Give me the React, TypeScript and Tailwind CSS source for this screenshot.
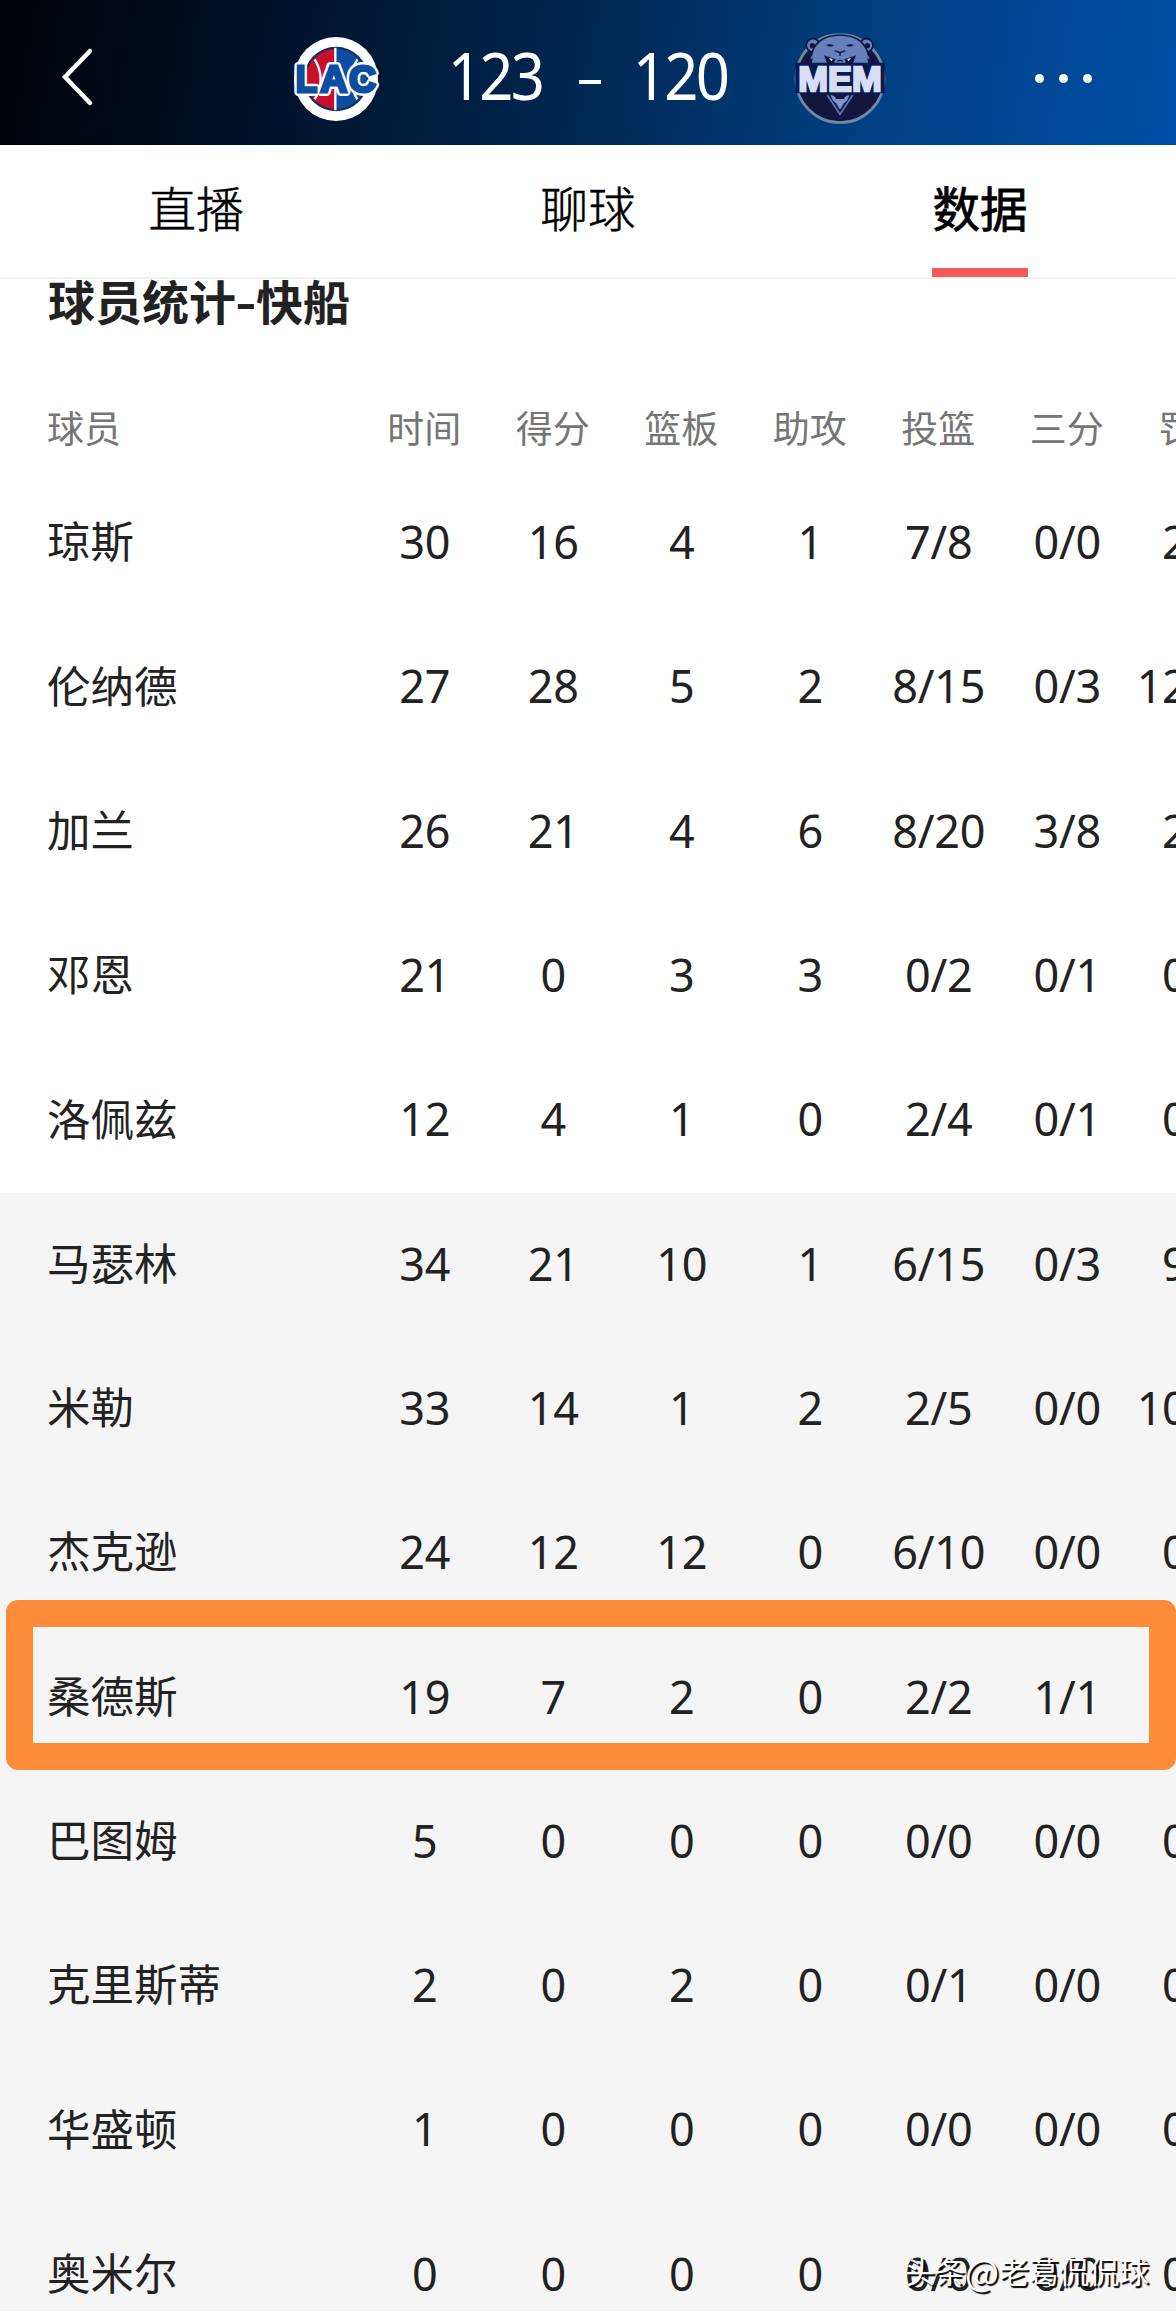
import React from 'react';

const columns = ['时间', '得分', '篮板', '助攻', '投篮', '三分', '罚球'];

const starters = [
  { name: '琼斯', stats: ['30', '16', '4', '1', '7/8', '0/0', '2/2'] },
  { name: '伦纳德', stats: ['27', '28', '5', '2', '8/15', '0/3', '12/12'] },
  { name: '加兰', stats: ['26', '21', '4', '6', '8/20', '3/8', '2/2'] },
  { name: '邓恩', stats: ['21', '0', '3', '3', '0/2', '0/1', '0/0'] },
  { name: '洛佩兹', stats: ['12', '4', '1', '0', '2/4', '0/1', '0/0'] },
];

const bench = [
  { name: '马瑟林', stats: ['34', '21', '10', '1', '6/15', '0/3', '9/9'] },
  { name: '米勒', stats: ['33', '14', '1', '2', '2/5', '0/0', '10/10'] },
  { name: '杰克逊', stats: ['24', '12', '12', '0', '6/10', '0/0', '0/0'] },
  { name: '桑德斯', stats: ['19', '7', '2', '0', '2/2', '1/1', '2/2'], marked: true },
  { name: '巴图姆', stats: ['5', '0', '0', '0', '0/0', '0/0', '0/0'] },
  { name: '克里斯蒂', stats: ['2', '0', '2', '0', '0/1', '0/0', '0/0'] },
  { name: '华盛顿', stats: ['1', '0', '0', '0', '0/0', '0/0', '0/0'] },
  { name: '奥米尔', stats: ['0', '0', '0', '0', '0/0', '0/0', '0/0'] },
];

function ClippersLogo() {
  return (
    <svg viewBox="0 0 360 360" className="h-[120px] w-[120px] shrink-0">
      <circle cx="168" cy="177" r="126" fill="#fff" />
      <circle cx="168" cy="177" r="97" fill="#10305f" />
      <path d="M168 87a90 90 0 0 0 0 180z" fill="#c8102e" />
      <path d="M168 87a90 90 0 0 1 0 180z" fill="#0b4da2" />
      <path d="M166 83v188M104 118q36 60 0 120M232 118q-36 60 0 120" fill="none" stroke="#fff" strokeWidth="7" />
      <g fontFamily="Liberation Sans, sans-serif" fontWeight="700" fontSize="112" strokeLinejoin="round">
        <g fill="#fff" stroke="#fff" strokeWidth="24">
          <text x="47" y="217" textLength="64" lengthAdjust="spacingAndGlyphs">L</text>
          <text x="121" y="217">A</text>
          <text x="207" y="217">C</text>
        </g>
        <g fill="#0b4da2" stroke="#0b4da2" strokeWidth="9" strokeLinejoin="miter">
          <text x="47" y="217" textLength="64" lengthAdjust="spacingAndGlyphs">L</text>
          <text x="121" y="217">A</text>
          <text x="207" y="217">C</text>
        </g>
      </g>
    </svg>
  );
}

function GrizzliesLogo() {
  return (
    <svg viewBox="0 0 360 360" className="h-[120px] w-[120px] shrink-0">
      <circle cx="180" cy="176" r="132" fill="#12173f" stroke="#7088a8" strokeWidth="8" />
      <g fill="#6580bd" stroke="#12173f" strokeWidth="5">
        <circle cx="99" cy="76" r="20" />
        <circle cx="259" cy="76" r="20" />
        <path d="M118 64q24-19 62-19t62 19q20 20 22 38l11 18-10-2 4 20H91l4-20-10 2 11-18q2-20 22-38z" />
      </g>
      <g fill="#12173f">
        <circle cx="97" cy="77" r="8" />
        <circle cx="262" cy="77" r="8" />
        <path d="M138 76q12-7 24 1l-12 3zM222 76q-12-7-24 1l12 3z" />
        <path d="M132 106l34 12-4 14h-20zM228 106l-34 12 4 14h20z" />
      </g>
      <path d="M164 92l16 6 16-6M180 98v10M172 124q8-6 16 0" fill="none" stroke="#12173f" strokeWidth="4" />
      <path d="M146 114l12 3-3 7zM214 114l-12 3 3 7z" fill="#e9e6cf" />
      <path d="M46 128h268v92H46z" fill="#081b4c" />
      <path d="M142 225l38 58 38-58" fill="none" stroke="#6580bd" strokeWidth="5" />
      <path d="M152 225q14 3 16 12h24q2-9 16-12-6 20-16 24l-12 20-12-20q-10-4-16-24z" fill="#7f97cf" />
      <text
        x="55"
        y="214"
        fontFamily="Liberation Sans, sans-serif"
        fontWeight="700"
        fontSize="106"
        textLength="250"
        lengthAdjust="spacingAndGlyphs"
        fill="#d6def5"
        stroke="#d6def5"
        strokeWidth="7"
      >
        MEM
      </text>
    </svg>
  );
}

function PlayerRow({ player }: { player: { name: string; stats: string[]; marked?: boolean } }) {
  return (
    <div className="relative flex h-[144.3px] items-center pl-[47px]">
      <div className="w-[313.5px] shrink-0 pb-[7px] text-[43.5px] leading-none">{player.name}</div>
      {player.stats.map((stat, i) => (
        <div key={i} className="flex w-[128.5px] shrink-0 justify-center pb-[4px] font-['Noto_Sans'] text-[45px] leading-none tracking-[-0.3px]">
          {stat}
        </div>
      ))}
      {player.marked && (
        <div className="absolute -top-[26px] left-[6px] h-[170px] w-[1170px] rounded-xl border-[27px] border-[#fd8c3a]"></div>
      )}
    </div>
  );
}

export default function App() {
  return (
    <div className="relative h-[2314px] w-[1176px] overflow-hidden bg-white font-['Noto_Sans_CJK_SC',sans-serif] text-[#222]">
      <header className="flex h-[145px] items-center bg-[linear-gradient(100deg,#000206_0%,#00132c_25%,#00264f_48%,#003c7c_70%,#0050a8_100%)] text-white">
        <div className="flex w-[280px] shrink-0 pl-[58px]">
          <svg viewBox="0 0 40 64" className="mt-[9px] h-16 w-10" fill="none" stroke="#fff" strokeWidth="4.5" strokeLinecap="round">
            <path d="M32 6L7 32l25 26" />
          </svg>
        </div>
        <div className="pt-[15px]">
          <ClippersLogo />
        </div>
        <div className="flex w-[380px] items-center justify-center pt-[5px] font-['Noto_Sans'] text-[65px] leading-none tracking-[-3px]">
          <span className="w-[130px] scale-x-[0.92] text-center">123</span>
          <span className="mr-[14px] ml-[19px] mt-[14px] h-1 w-[22px] bg-white"></span>
          <span className="w-[130px] scale-x-[0.92] text-center">120</span>
          <span className="w-[5px]"></span>
        </div>
        <div className="pt-[15px]">
          <GrizzliesLogo />
        </div>
        <div className="flex gap-[15px] pt-[11px] pl-[135px]">
          <span className="h-[9px] w-[9px] rounded-full bg-white"></span>
          <span className="h-[9px] w-[9px] rounded-full bg-white"></span>
          <span className="h-[9px] w-[9px] rounded-full bg-white"></span>
        </div>
      </header>

      <nav className="grid h-[134px] grid-cols-3 border-b-2 border-[#f2f2f2] text-[47.5px] leading-none text-black">
        <div className="flex justify-center pt-[38px] font-light [-webkit-text-stroke:0.5px_#000]">直播</div>
        <div className="flex justify-center pt-[38px] font-light [-webkit-text-stroke:0.5px_#000]">聊球</div>
        <div className="flex flex-col items-center justify-between pt-[38px] font-normal [-webkit-text-stroke:0.8px_#000]">
          数据
          <div className="h-[9px] w-24 bg-[#f25b57]"></div>
        </div>
      </nav>

      <h2 className="-mt-[3px] h-[110px] pl-12 text-[47px] leading-none font-bold">
        球员统计<span className="inline-block w-5 scale-x-[1.25] text-center">-</span>快船
      </h2>

      <div className="flex h-[85.5px] items-center pb-[2px] pl-[47px] text-[37px] leading-none text-[#757575]">
        <div className="w-[313px] shrink-0">球员</div>
        {columns.map((column) => (
          <div key={column} className="flex w-[128.5px] shrink-0 justify-center">{column}</div>
        ))}
      </div>

      <div>
        {starters.map((player) => (
          <PlayerRow key={player.name} player={player} />
        ))}
      </div>
      <div className="h-[1118.5px] overflow-hidden bg-[#f5f5f5]">
        {bench.map((player) => (
          <PlayerRow key={player.name} player={player} />
        ))}
      </div>

      <div className="absolute right-[27px] bottom-[26px] flex items-center text-[30px] leading-none whitespace-nowrap text-white [text-shadow:2px_2px_1px_#000]">
        头条<span className="text-[36px]">@</span>老葛侃侃球
      </div>
    </div>
  );
}
